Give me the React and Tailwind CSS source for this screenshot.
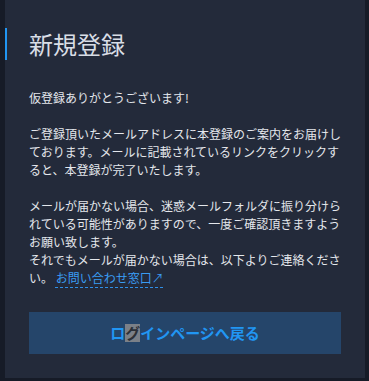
import React from 'react';

const RegisterComplete = () => {
  return (
    <div className="min-h-screen bg-[#161b27] pl-[5px] pb-[4px]" style={{ fontFamily: '"Noto Sans CJK JP", "Noto Sans", sans-serif' }}>
      <div className="w-[360px] bg-[#232a3a] pt-[28px] pb-[24px]">
        <h1 className="border-l-2 border-[#2196f3] pl-[22px] text-[24px] leading-[32px] font-normal text-[#d9dee6]">
          新規登録
        </h1>

        <div className="pl-[24px] pr-[20px] pt-[29px] text-[12px] leading-[18px] text-[#e4e7ec]">
          <p className="mb-[18px]">仮登録ありがとうございます!</p>
          <p className="mb-[18px]">
            ご登録頂いたメールアドレスに本登録のご案内をお届けしております。メールに記載されているリンクをクリックすると、本登録が完了いたします。
          </p>
          <p>
            メールが届かない場合、迷惑メールフォルダに振り分けられている可能性がありますので、一度ご確認頂きますようお願い致します。
            <br />
            それでもメールが届かない場合は、以下よりご連絡ください。{' '}
            <a href="#" className="text-[#3a9cf2] underline decoration-dashed decoration-[#2f8fe6] underline-offset-[4px]">
              お問い合わせ窓口↗
            </a>
          </p>

          <button className="mt-[25px] flex h-[42px] w-[312px] items-center justify-center bg-[#25456a] text-[15px] font-bold text-[#2196f3]">
            ロ<span className="bg-[#7b8088] text-[#2c3038]">グ</span>インページへ戻る
          </button>
        </div>
      </div>
    </div>
  );
};

export default RegisterComplete;
